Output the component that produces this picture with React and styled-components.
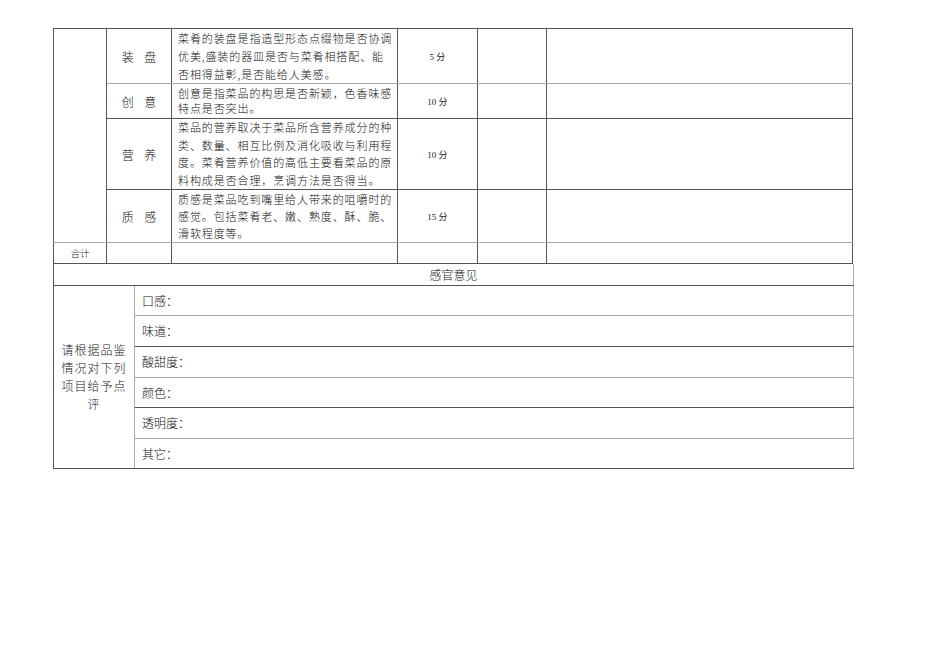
import React from 'react'
import styled, { createGlobalStyle } from 'styled-components'

const GlobalStyle = createGlobalStyle`
  body {
    margin: 0;
    background: #fff;
    font-family: "Noto Sans CJK SC", "Noto Sans", sans-serif;
    color: #111;
  }
`

const items = [
  {
    name: '装 盘',
    score: '5 分',
    height: 53,
    lh: 18,
    lines: [
      '菜肴的装盘是指造型形态点缀物是否协调',
      '优美,盛装的器皿是否与菜肴相搭配、能',
      '否相得益彰,是否能给人美感。',
    ],
  },
  {
    name: '创 意',
    score: '10 分',
    height: 35,
    lh: 15,
    lines: ['创意是指菜品的构思是否新颖，色香味感', '特点是否突出。'],
  },
  {
    name: '营 养',
    score: '10 分',
    height: 71,
    lh: 17.5,
    lines: [
      '菜品的营养取决于菜品所含营养成分的种',
      '类、数量、相互比例及消化吸收与利用程',
      '度。菜肴营养价值的高低主要看菜品的原',
      '料构成是否合理，烹调方法是否得当。',
    ],
  },
  {
    name: '质 感',
    score: '15 分',
    height: 53,
    lh: 17,
    lines: [
      '质感是菜品吃到嘴里给人带来的咀嚼时的',
      '感觉。包括菜肴老、嫩、熟度、酥、脆、',
      '滑软程度等。',
    ],
  },
]

const opinions = [
  { label: '口感：', height: 30, light: true },
  { label: '味道：', height: 31 },
  { label: '酸甜度：', height: 31, light: true },
  { label: '颜色：', height: 30 },
  { label: '透明度：', height: 31, light: true },
  { label: '其它：', height: 30 },
]

const App = () => (
  <Page>
    <GlobalStyle />
    <ScoreTable>
      <colgroup>
        <col style={{ width: 53 }} />
        <col style={{ width: 65 }} />
        <col style={{ width: 226 }} />
        <col style={{ width: 80 }} />
        <col style={{ width: 69 }} />
        <col style={{ width: 306 }} />
      </colgroup>
      <tbody>
        {items.map((item, i) => (
          <Row key={item.name} $h={item.height} $light={i === 0 || i === 3}>
            {i === 0 && <Cell rowSpan={items.length} />}
            <NameCell>{item.name}</NameCell>
            <DescCell $lh={item.lh}>
              {item.lines.map((l) => (
                <div key={l}>{l}</div>
              ))}
            </DescCell>
            <ScoreCell>{item.score}</ScoreCell>
            <Cell />
            <Cell />
          </Row>
        ))}
        <Row $h={21}>
          <TotalCell>合计</TotalCell>
          <Cell />
          <Cell />
          <Cell />
          <Cell />
          <Cell />
        </Row>
      </tbody>
    </ScoreTable>
    <OpinionTable>
      <colgroup>
        <col style={{ width: 81 }} />
        <col style={{ width: 719 }} />
      </colgroup>
      <tbody>
        <OpRow $h={21}>
          <HeadCell colSpan={2}>感官意见</HeadCell>
        </OpRow>
        {opinions.map((o, i) => (
          <OpRow key={o.label} $h={o.height} $light={o.light}>
            {i === 0 && (
              <NoteCell rowSpan={opinions.length}>
                请根据品鉴
                <br />
                情况对下列
                <br />
                项目给予点
                <br />
                评
              </NoteCell>
            )}
            <FieldCell>{o.label}</FieldCell>
          </OpRow>
        ))}
      </tbody>
    </OpinionTable>
  </Page>
)

const Page = styled.div`
  padding: 28px 0 0 53px;
`

const ScoreTable = styled.table`
  border-collapse: collapse;
  table-layout: fixed;
  width: 800px;
  border: 1px solid #555;

  td {
    border: 1px solid #555;
    padding: 0;
  }
`

const Row = styled.tr`
  height: ${(p) => p.$h}px;

  td {
    border-bottom-color: ${(p) => (p.$light ? '#a8a8a8' : '#555')};
  }
`

const Cell = styled.td``

const NameCell = styled.td`
  text-align: center;
  font-size: 12px;
  font-weight: 300;
  color: #111;
  white-space: pre;
  letter-spacing: 4px;
  padding-left: 4px !important;
`

const DescCell = styled.td`
  padding: 0 0 0 6px !important;
  font-size: 11px;
  font-weight: 300;
  letter-spacing: 0.9px;
  line-height: ${(p) => p.$lh}px;
  color: #111;
  white-space: nowrap;
  vertical-align: middle;
`

const ScoreCell = styled.td`
  text-align: center;
  font-family: "Liberation Serif", "Noto Sans CJK SC", serif;
  font-size: 9px;
  color: #222;
`

const TotalCell = styled.td`
  text-align: center;
  font-size: 9.5px;
  font-weight: 300;
  color: #111;
`

const OpinionTable = styled.table`
  border-collapse: collapse;
  table-layout: fixed;
  width: 801px;
  border-left: 1px solid #555;
  border-right: 1px solid #aaa;
  border-bottom: 1px solid #555;

  td {
    padding: 0;
  }
`

const OpRow = styled.tr`
  height: ${(p) => p.$h}px;

  td {
    border-bottom: 1px solid ${(p) => (p.$light ? '#a8a8a8' : '#555')};
  }
`

const HeadCell = styled.td`
  text-align: center;
  font-size: 12px;
  font-weight: 300;
  color: #111;
`

const NoteCell = styled.td`
  text-align: center;
  font-size: 12px;
  font-weight: 300;
  letter-spacing: 1px;
  line-height: 18px;
  color: #222;
  border-right: 1px solid #aaa;
  border-bottom-color: #555 !important;
`

const FieldCell = styled.td`
  padding-left: 7px !important;
  font-size: 12px;
  font-weight: 300;
  color: #111;
`

export default App
